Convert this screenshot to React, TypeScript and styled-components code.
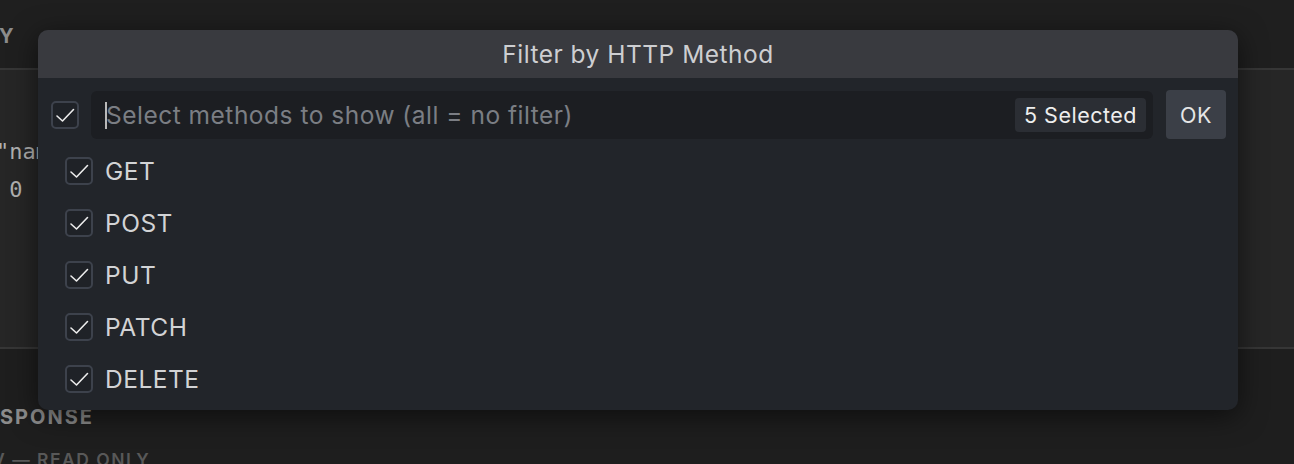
import React from 'react'
import styled, { createGlobalStyle } from 'styled-components'

const GlobalStyle = createGlobalStyle`
	html, body {
		margin: 0;
		padding: 0;
		background: #1e1e1e;
		overflow: hidden;
	}
	body {
		font-family: Inter, 'Noto Sans', sans-serif;
	}
`

const methods = ['GET', 'POST', 'PUT', 'PATCH', 'DELETE']

const Page = styled.div`
	position: relative;
	width: 1294px;
	height: 464px;
	display: flex;
	flex-direction: column;
	overflow: hidden;
`

const Band = styled.div<{ $bg: string; $h: number }>`
	height: ${p => p.$h}px;
	background: ${p => p.$bg};
	border-bottom: 2px solid #363636;
	flex-shrink: 0;
	overflow: hidden;
`

const SectionTitle = styled.div<{ $top: number }>`
	padding-top: ${p => p.$top}px;
	font-size: 20px;
	font-weight: 700;
	letter-spacing: 2px;
	color: #8c8c8c;
	line-height: 24px;
`

const Code = styled.pre`
	margin: 0;
	padding-top: 63px;
	margin-left: -4px;
	font-family: 'DejaVu Sans Mono', 'Liberation Mono', monospace;
	font-size: 22px;
	line-height: 38px;
	color: #b0b0b0;
`

const Bottom = styled.div`
	flex: 1;
	background: #1e1e1e;
	display: flex;
	flex-direction: column;
`

const SubTitle = styled.div`
	padding-top: 20px;
	font-size: 17.5px;
	font-weight: 600;
	letter-spacing: 1.5px;
	color: #585858;
	margin-left: -8px;
`

const Dialog = styled.div`
	position: absolute;
	left: 38px;
	top: 30px;
	width: 1200px;
	height: 380px;
	border-radius: 10px;
	background: #22252a;
	box-shadow: 0 6px 28px rgba(0, 0, 0, 0.55);
	overflow: hidden;
	display: flex;
	flex-direction: column;
	letter-spacing: 0.5px;
`

const Header = styled.div`
	height: 48px;
	background: #393a3f;
	display: flex;
	align-items: center;
	justify-content: center;
	color: #cdced1;
	font-size: 24.5px;
`

const Body = styled.div`
	display: flex;
	flex-direction: column;
	padding: 12px 12px 0 13px;
`

const TopRow = styled.div`
	display: flex;
	align-items: center;
	gap: 12px;
`

const SearchBox = styled.div`
	flex: 1;
	height: 48px;
	border-radius: 6px;
	background: #1c1e22;
	display: flex;
	align-items: center;
	padding: 0 7px 0 14px;
	margin-top: 1px;
`

const Caret = styled.span`
	width: 2px;
	height: 27px;
	background: #b9b9b9;
`

const Placeholder = styled.span`
	flex: 1;
	font-size: 24.5px;
	color: #7b7e84;
	margin-left: -1px;
`

const Badge = styled.span`
	height: 34px;
	padding: 0 9px;
	border-radius: 4px;
	background: #2b2e34;
	color: #eeeeee;
	font-size: 21.5px;
	display: flex;
	align-items: center;
`

const OkButton = styled.button`
	width: 60px;
	height: 49px;
	border: none;
	border-radius: 4px;
	background: #3b3f47;
	color: #e6e6e6;
	font-family: inherit;
	font-size: 21.5px;
	letter-spacing: 0.5px;
	padding: 0;
	margin-left: 1px;
`

const List = styled.div`
	display: flex;
	flex-direction: column;
	padding: 6px 0 0 14px;
`

const Item = styled.div`
	height: 52px;
	display: flex;
	align-items: center;
	gap: 12px;
	color: #d2d3d5;
	font-size: 24.5px;
`

const Box = styled.span`
	width: 28px;
	height: 28px;
	box-sizing: border-box;
	border: 2px solid #3d424c;
	border-radius: 5px;
	background: #1f2227;
	display: flex;
	align-items: center;
	justify-content: center;
	flex-shrink: 0;
`

const Check = () => (
	<Box>
		<svg width="22" height="22" viewBox="0 0 22 22" fill="none">
			<polyline points="3,12 8.5,17 19.5,5.5" stroke="#ececec" strokeWidth="1.6" strokeLinecap="round" strokeLinejoin="round" />
		</svg>
	</Box>
)

export default function App() {
	return (
		<Page>
			<GlobalStyle />
			<Band $bg="#1f1f1f" $h={68}>
				<SectionTitle $top={24} style={{ marginLeft: -1 }}>Y</SectionTitle>
			</Band>
			<Band $bg="#262626" $h={277}>
				<Code>{'"name": "'}{'\n'}{' 0'}</Code>
			</Band>
			<Bottom>
				<SectionTitle $top={56}>SPONSE</SectionTitle>
				<SubTitle>V — READ ONLY</SubTitle>
			</Bottom>

			<Dialog>
				<Header>Filter by HTTP Method</Header>
				<Body>
					<TopRow>
						<Check />
						<SearchBox>
							<Caret />
							<Placeholder>Select methods to show (all = no filter)</Placeholder>
							<Badge>5 Selected</Badge>
						</SearchBox>
						<OkButton>OK</OkButton>
					</TopRow>
					<List>
						{methods.map(m => (
							<Item key={m}>
								<Check />
								{m}
							</Item>
						))}
					</List>
				</Body>
			</Dialog>
		</Page>
	)
}
